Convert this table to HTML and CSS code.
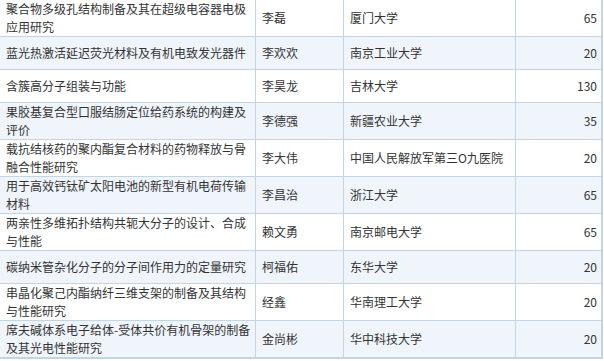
FILE: index.html
```html
<!DOCTYPE html>
<html lang="zh">
<head>
    <meta charset="UTF-8">
    <title>项目列表</title>
    <link rel="stylesheet" href="styles.css">
</head>
<body>
<table class="fund-table">
    <colgroup>
        <col class="col-title">
        <col class="col-name">
        <col class="col-unit">
        <col class="col-money">
    </colgroup>
    <tbody>
    <tr><td>聚合物多级孔结构制备及其在超级电容器电极应用研究</td><td>李磊</td><td>厦门大学</td><td class="num">65</td></tr>
    <tr><td>蓝光热激活延迟荧光材料及有机电致发光器件</td><td>李欢欢</td><td>南京工业大学</td><td class="num">20</td></tr>
    <tr><td>含簇高分子组装与功能</td><td>李昊龙</td><td>吉林大学</td><td class="num">130</td></tr>
    <tr><td>果胶基复合型口服结肠定位给药系统的构建及评价</td><td>李德强</td><td>新疆农业大学</td><td class="num">35</td></tr>
    <tr><td>载抗结核药的聚内酯复合材料的药物释放与骨融合性能研究</td><td>李大伟</td><td>中国人民解放军第三O九医院</td><td class="num">20</td></tr>
    <tr><td>用于高效钙钛矿太阳电池的新型有机电荷传输材料</td><td>李昌治</td><td>浙江大学</td><td class="num">65</td></tr>
    <tr><td>两亲性多维拓扑结构共轭大分子的设计、合成与性能</td><td>赖文勇</td><td>南京邮电大学</td><td class="num">65</td></tr>
    <tr><td>碳纳米管杂化分子的分子间作用力的定量研究</td><td>柯福佑</td><td>东华大学</td><td class="num">20</td></tr>
    <tr><td>串晶化聚己内酯纳纤三维支架的制备及其结构与性能研究</td><td>经鑫</td><td>华南理工大学</td><td class="num">20</td></tr>
    <tr><td>席夫碱体系电子给体-受体共价有机骨架的制备及其光电性能研究</td><td>金尚彬</td><td>华中科技大学</td><td class="num">20</td></tr>
    </tbody>
</table>
</body>
</html>
```

FILE: styles.css
```css
body {
    margin: 0;
    background-color: #ffffff;
    font-family: "Noto Sans CJK SC", "Microsoft YaHei", sans-serif;
    font-size: 12px;
    color: #333333;
}
.fund-table {
    width: 603px;
    table-layout: fixed;
    border-collapse: separate;
    border-spacing: 0;
}
.col-title {
    width: 256px;
}
.col-name {
    width: 88px;
}
.col-unit {
    width: 172px;
}
.col-money {
    width: 87px;
}
.fund-table td {
    padding: 0 4px 0 6px;
    line-height: 18px;
    height: 32px;
    vertical-align: middle;
    border-right: 1px solid #c3d5e3;
    border-bottom: 1px solid #c3d5e3;
}
.fund-table td:last-child {
    border-right: 2px solid #c3d5e3;
}
.fund-table tr:last-child td {
    border-bottom: 2px solid #c3d5e3;
}
.fund-table tr:nth-child(even) td {
    background-color: #eff5fb;
}
.fund-table td.num {
    text-align: right;
    padding-right: 4px;
}
```
